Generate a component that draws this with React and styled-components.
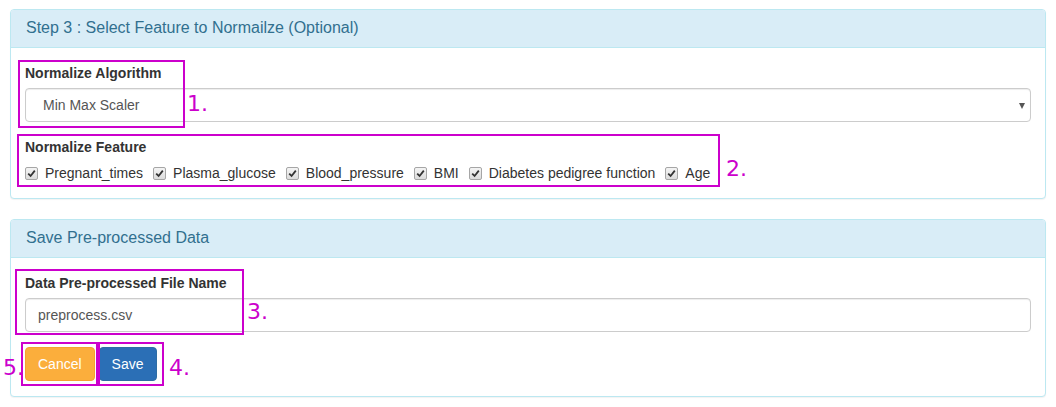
import React from 'react';
import styled, { createGlobalStyle } from 'styled-components';

const GlobalStyle = createGlobalStyle`
  html, body { margin: 0; padding: 0; background: #fff; }
  body {
    font-family: "Liberation Sans", Arial, sans-serif;
    font-size: 14px;
    line-height: 20px;
    color: #333;
  }
  * { box-sizing: border-box; }
`;

const Page = styled.div`
  position: relative;
  padding: 9px 10px 0 10px;
  width: 1056px;
  height: 407px;
`;

const Panel = styled.div`
  border: 1px solid #bce8f1;
  border-radius: 4px;
  margin-bottom: 20px;
  background: #fff;
  box-shadow: 0 1px 1px rgba(0, 0, 0, 0.05);
`;

const PanelHeading = styled.div`
  background: #d9edf7;
  color: #31708f;
  border-bottom: 1px solid #bce8f1;
  border-radius: 3px 3px 0 0;
  padding: 9px 15px 10px 15px;
  font-size: 16px;
  line-height: 18px;
`;

const PanelBody = styled.div`
  padding: 15px 14px 15px 14px;
`;

const FormGroup = styled.div`
  margin-bottom: ${p => (p.last ? '0' : '15px')};
`;

const Label = styled.div`
  font-weight: bold;
  margin-bottom: 5px;
`;

const SelectBox = styled.div`
  position: relative;
  height: 34px;
  border: 1px solid #ccc;
  border-radius: 4px;
  padding: 6px 12px 6px 17px;
  color: #555;
  box-shadow: inset 0 1px 1px rgba(0, 0, 0, 0.075);
`;

const Caret = styled.span`
  position: absolute;
  right: 5px;
  top: 14px;
  width: 0;
  height: 0;
  border-left: 3px solid transparent;
  border-right: 3px solid transparent;
  border-top: 6px solid #555;
`;

const TextInput = styled.div`
  height: 34px;
  border: 1px solid #ccc;
  border-radius: 4px;
  padding: 6px 12px;
  color: #555;
  box-shadow: inset 0 1px 1px rgba(0, 0, 0, 0.075);
`;

const CheckRow = styled.div`
  display: flex;
  align-items: center;
  height: 21px;
  padding-top: 1px;
`;

const CheckItem = styled.label`
  display: flex;
  align-items: center;
  margin-right: 10px;
  white-space: nowrap;
`;

const Box = styled.span`
  display: inline-flex;
  align-items: center;
  justify-content: center;
  width: 13px;
  height: 13px;
  margin: 0 7px 0 0;
  border: 1px solid #a6a6a6;
  border-radius: 2px;
  background: linear-gradient(#f4f4f4, #dcdcdc);
`;

const ButtonRow = styled.div`
  display: flex;
  gap: 4px;
`;

const Button = styled.button`
  font-family: inherit;
  font-size: 14px;
  line-height: 20px;
  height: 34px;
  padding: 6px 12px;
  border-radius: 4px;
  color: #fff;
  border: 1px solid ${p => (p.kind === 'warning' ? '#f5a030' : '#2e6da4')};
  background: ${p => (p.kind === 'warning' ? '#fbae3c' : '#2b6fb6')};
`;

const Mark = styled.div`
  position: absolute;
  border: 2px solid #cc00cc;
  pointer-events: none;
`;

const MarkNum = styled.span`
  position: absolute;
  font-family: "DejaVu Sans", sans-serif;
  font-size: 22px;
  line-height: 22px;
  color: #cc00cc;
`;

const Checkbox = ({ children }) => (
  <CheckItem>
    <Box>
      <svg width="9" height="9" viewBox="0 0 9 9">
        <path d="M1.2 4.6 L3.6 7 L7.8 1.6" fill="none" stroke="#333" strokeWidth="1.8" />
      </svg>
    </Box>
    {children}
  </CheckItem>
);

const features = [
  'Pregnant_times',
  'Plasma_glucose',
  'Blood_pressure',
  'BMI',
  'Diabetes pedigree function',
  'Age',
];

const marks = [
  { box: { left: 18, top: 60, width: 167, height: 68 }, num: '1.', at: { left: 187, top: 93 } },
  { box: { left: 17, top: 134, width: 703, height: 53 }, num: '2.', at: { left: 726, top: 158 } },
  { box: { left: 15, top: 269, width: 229, height: 66 }, num: '3.', at: { left: 247, top: 301 } },
  { box: { left: 98, top: 342, width: 66, height: 44 }, num: '4.', at: { left: 169, top: 357 } },
  { box: { left: 21, top: 342, width: 77, height: 44 }, num: '5.', at: { left: 3, top: 357 } },
];

export default function App() {
  return (
    <Page>
      <GlobalStyle />
      <Panel>
        <PanelHeading>Step 3 : Select Feature to Normailze (Optional)</PanelHeading>
        <PanelBody>
          <FormGroup>
            <Label>Normalize Algorithm</Label>
            <SelectBox>
              Min Max Scaler
              <Caret />
            </SelectBox>
          </FormGroup>
          <FormGroup last>
            <Label>Normalize Feature</Label>
            <CheckRow>
              {features.map(f => (
                <Checkbox key={f}>{f}</Checkbox>
              ))}
            </CheckRow>
          </FormGroup>
        </PanelBody>
      </Panel>
      <Panel>
        <PanelHeading>Save Pre-processed Data</PanelHeading>
        <PanelBody>
          <FormGroup>
            <Label>Data Pre-processed File Name</Label>
            <TextInput>preprocess.csv</TextInput>
          </FormGroup>
          <ButtonRow>
            <Button kind="warning">Cancel</Button>
            <Button kind="primary">Save</Button>
          </ButtonRow>
        </PanelBody>
      </Panel>
      {marks.map(m => (
        <React.Fragment key={m.num}>
          <Mark style={m.box} />
          <MarkNum style={m.at}>{m.num}</MarkNum>
        </React.Fragment>
      ))}
    </Page>
  );
}
